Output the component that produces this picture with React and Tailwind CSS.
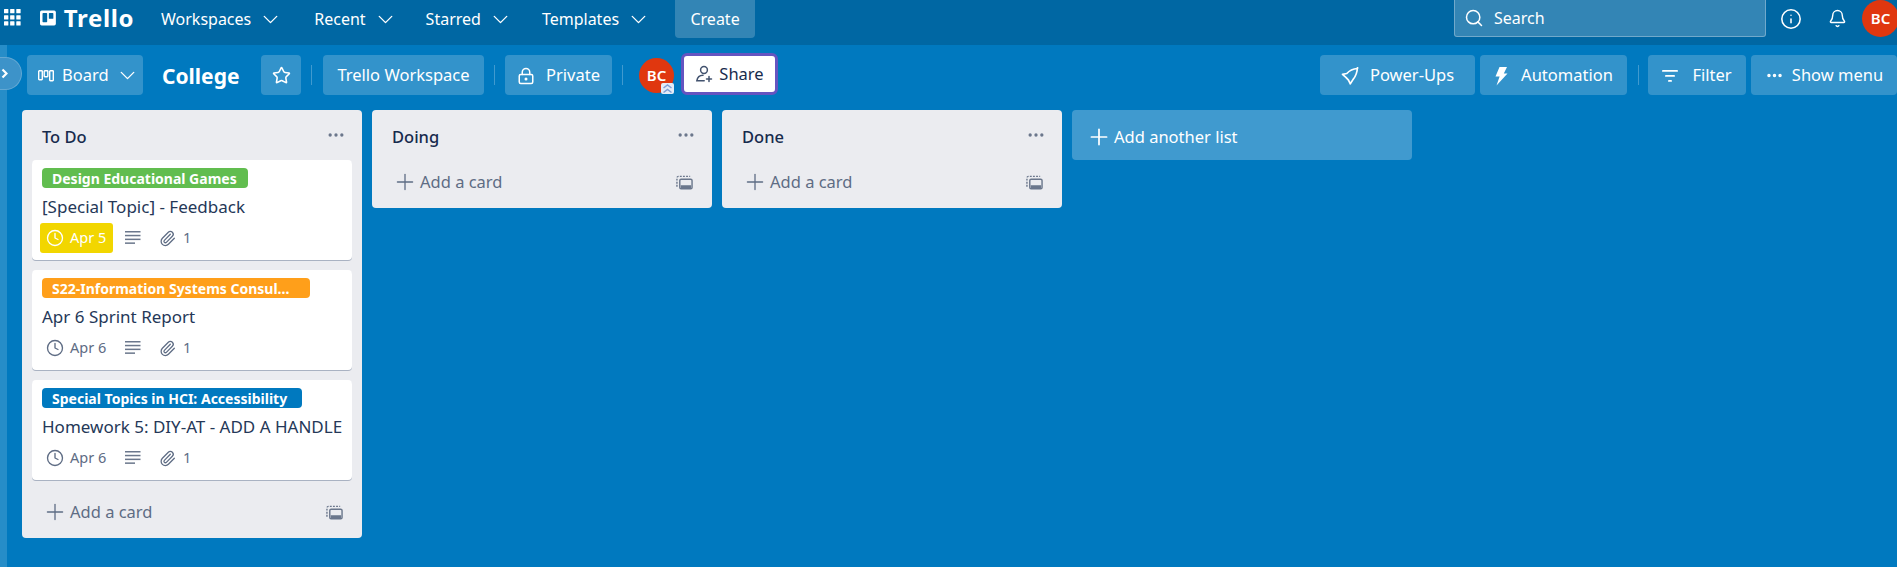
import React from 'react';
import { Bell, ChevronDown, Clock, Info, LockKeyhole, MoreHorizontal, Paperclip, Plus, Search, Star } from 'lucide-react';

const NavItem = ({ label, className }) => (
  <button className={`flex items-center gap-[7px] text-white text-[16px] ${className}`}>
    {label}
    <ChevronDown size={25} strokeWidth={1.3} />
  </button>
);

const HeadButton = ({ children, className = '' }) => (
  <button className={`flex items-center justify-center h-10 pt-px rounded-[4px] bg-white/20 text-white text-[16.5px] ${className}`}>
    {children}
  </button>
);

const Divider = ({ className = '' }) => <div className={`w-px h-5 bg-white/25 ${className}`} />;

const GridIcon = () => (
  <svg width="17" height="17" viewBox="0 0 18 18" fill="white">
    {[0, 6.5, 13].map((y) =>
      [0, 6.5, 13].map((x) => <rect key={`${x}-${y}`} x={x} y={y} width="4.6" height="4.6" rx="0.6" />)
    )}
  </svg>
);

const TrelloMark = () => (
  <svg width="19" height="18" viewBox="0 0 19 18">
    <rect width="19" height="18" rx="2" fill="white" />
    <rect x="3" y="3" width="5.6" height="11" rx="0.8" fill="#0067a3" />
    <rect x="10.6" y="3" width="5.4" height="7" rx="0.8" fill="#0067a3" />
  </svg>
);

const BoardIcon = () => (
  <svg width="16" height="12" viewBox="0 0 16 12" fill="none" stroke="white" strokeWidth="1.4">
    <rect x="0.7" y="0.7" width="3.6" height="9" rx="0.6" />
    <rect x="6.2" y="0.7" width="3.6" height="6" rx="0.6" />
    <rect x="11.7" y="0.7" width="3.6" height="10" rx="0.6" />
  </svg>
);

const ShareIcon = () => (
  <svg width="18" height="18" viewBox="0 0 18 18" fill="none" stroke="#42526e" strokeWidth="1.5" strokeLinecap="round">
    <circle cx="9" cy="5" r="3.4" />
    <path d="M8 10.2c-3.2 0-5.6 2-6.2 5.6h7.4" />
    <path d="M14 11.5v5M11.5 14h5" />
  </svg>
);

const RocketIcon = () => (
  <svg width="18" height="18" viewBox="0 0 18 18" fill="none" stroke="white" strokeWidth="1.7" strokeLinejoin="round">
    <path d="M16.5 1.5C12 1.8 8.5 3.4 5.8 6.5L1.5 7.4l3.4 3 2.6 2.8 1.8 3.6 2.8-4.4c2.6-3 4-6.6 4.4-11.9Z" />
  </svg>
);

const BoltIcon = () => (
  <svg width="14" height="20" viewBox="0 0 14 20" fill="white">
    <path d="M5.5 1h7.5L9.8 7.6H13.5L2.5 19.5 5.6 10.6H1.5L5.5 1Z" />
  </svg>
);

const FilterIcon = () => (
  <svg width="16" height="14" viewBox="0 0 16 14" fill="white">
    <rect x="0" y="1" width="16" height="1.8" rx="0.9" />
    <rect x="3" y="6" width="10" height="1.8" rx="0.9" />
    <rect x="6" y="11" width="4" height="1.8" rx="0.9" />
  </svg>
);

const DescIcon = () => (
  <svg width="16" height="14" viewBox="0 0 16 14" fill="#6b778c">
    <rect y="0" width="15.5" height="1.5" />
    <rect y="3.8" width="15.5" height="1.5" />
    <rect y="7.6" width="15.5" height="1.5" />
    <rect y="11.4" width="10" height="1.5" />
  </svg>
);

const TemplateIcon = () => (
  <svg width="17" height="15" viewBox="0 0 18 15" fill="none" stroke="#6b778c">
    <path d="M1 12V2.5A1.5 1.5 0 0 1 2.5 1H15" strokeWidth="1.5" strokeDasharray="2 1.3" />
    <rect x="4" y="4" width="13" height="10.2" rx="1.4" strokeWidth="1.5" />
    <rect x="5" y="10.4" width="11" height="3.2" fill="#6b778c" stroke="none" />
  </svg>
);

const Avatar = ({ className = '' }) => (
  <div className={`flex items-center justify-center rounded-full bg-[#e0370f] text-white font-semibold text-[15px] ${className}`}>BC</div>
);

const Card = ({ label, labelColor, labelWidth, title, date, overdue }) => (
  <div className="h-[100px] rounded-[4px] bg-white shadow-[0_1px_0_#a9b2c2] pl-[10px] pt-2">
    <div className={`flex items-center h-5 rounded-[4px] pl-[10px] text-white font-bold text-[14px] whitespace-nowrap overflow-hidden ${labelColor} ${labelWidth}`}>
      {label}
    </div>
    <div className="mt-[7px] h-6 leading-6 text-[#253858] text-[17px] whitespace-nowrap">{title}</div>
    <div className="flex items-center mt-[4px] h-[30px] text-[#5e6c84] text-[14.5px]">
      <div className={`flex items-center gap-[6px] h-[30px] -ml-[2px] pl-[6px] rounded-[3px] w-[73px] whitespace-nowrap ${overdue ? 'bg-[#f2d600] text-white' : ''}`}>
        <Clock size={18} strokeWidth={1.8} />
        <span>{date}</span>
      </div>
      <div className="ml-3"><DescIcon /></div>
      <Paperclip size={17} strokeWidth={1.8} className="ml-[18px]" />
      <span className="ml-[7px]">1</span>
    </div>
  </div>
);

const AddCard = () => (
  <div className="flex items-center justify-between h-12 pl-5 pr-[19px] pb-1 text-[#5e6c84] text-[16.5px]">
    <div className="flex items-center gap-[2px]">
      <Plus size={26} strokeWidth={1.2} />
      <span>Add a card</span>
    </div>
    <TemplateIcon />
  </div>
);

const List = ({ title, children }) => (
  <div className="w-[340px] shrink-0 rounded-[4px] bg-[#ebecf0]">
    <div className="flex items-center justify-between h-[50px] pl-5 pr-4 pt-1 text-[#172b4d] font-medium text-[16.5px]">
      <span>{title}</span>
      <MoreHorizontal size={20} color="#6b778c" className="-mt-1" />
    </div>
    {children}
  </div>
);

export default function App() {
  return (
    <div className="h-[567px] w-[1897px] overflow-hidden bg-[#0079bf] font-['Noto_Sans',sans-serif]">
      <header className="flex items-start h-[45px] bg-[#0067a3]">
        <div className="mt-[9px] ml-[4px]"><GridIcon /></div>
        <div className="flex items-center gap-[8px] mt-[9px] ml-[19px] h-[18px] w-[94px] text-white font-bold text-[24px] tracking-[0.6px]">
          <TrelloMark />
          <span>Trello</span>
        </div>
        <div className="flex items-center h-[38px] ml-[27px]">
          <NavItem label="Workspaces" />
          <NavItem label="Recent" className="ml-[31px]" />
          <NavItem label="Starred" className="ml-[28px]" />
          <NavItem label="Templates" className="ml-[29px]" />
          <button className="h-[38px] w-[80px] ml-[24px] rounded-b-[4px] bg-white/20 text-white text-[16px]">Create</button>
        </div>
        <div className="flex items-center h-[37px] ml-auto">
          <div className="flex items-center gap-[10px] w-[312px] h-[37px] pl-[9px] rounded-b-[3px] border border-t-0 border-white/30 bg-white/20 text-white text-[16px]">
            <Search size={20} strokeWidth={1.8} />
            <span>Search</span>
          </div>
          <Info size={22} strokeWidth={1.7} color="white" className="ml-[14px]" />
          <Bell size={19} strokeWidth={1.8} color="white" className="ml-[26px]" />
          <Avatar className="w-[37px] h-[37px] ml-[15px] -mr-[2px] shrink-0" />
        </div>
      </header>

      <div className="relative">
        <div className="absolute left-0 top-0 w-[7px] h-[522px] bg-white/15" />
        <div className="absolute -left-[15px] top-[12px] flex items-center justify-end w-[37px] h-[33px] rounded-full bg-[#3d93c9] pr-[13px] border border-white/20">
          <svg width="7" height="11" viewBox="0 0 7 11" fill="none" stroke="white" strokeWidth="2.2"><path d="M1.5 1.5l4 4-4 4" /></svg>
        </div>

        <div className="flex items-center h-[65px] pl-[27px] pb-[5px] text-white">
          <HeadButton className="w-[116px] !justify-start pl-[11px] gap-2">
            <BoardIcon />
            <span>Board</span>
            <ChevronDown size={25} strokeWidth={1.3} className="-ml-[2px]" />
          </HeadButton>
          <div className="ml-[19px] mt-[3px] w-[99px] font-bold text-[21px]">College</div>
          <HeadButton className="w-10"><Star size={19} strokeWidth={2} /></HeadButton>
          <Divider className="ml-[10px]" />
          <HeadButton className="w-[161px] ml-[11px]">Trello Workspace</HeadButton>
          <Divider className="ml-[10px]" />
          <HeadButton className="w-[107px] ml-[10px] gap-[11px]">
            <LockKeyhole size={18} strokeWidth={2} />
            <span>Private</span>
          </HeadButton>
          <Divider className="ml-[10px]" />
          <div className="relative ml-[16px]">
            <Avatar className="w-[35px] h-[35px]" />
            <svg className="absolute right-0 -bottom-[1px]" width="13" height="11" viewBox="0 0 13 11" fill="none" stroke="#7fa0d8" strokeWidth="1.5">
              <rect width="13" height="11" fill="#e4ecf7" stroke="none" rx="2" />
              <path d="M2.5 5l4-3 4 3M2.5 9.5l4-3 4 3" />
            </svg>
          </div>
          <button className="flex items-center justify-center gap-[6px] w-[97px] h-[42px] ml-[7px] -mt-[2px] rounded-[6px] border-[3px] border-[#6554c0] bg-white text-[#172b4d] text-[16.5px]">
            <ShareIcon />
            <span>Share</span>
          </button>
          <div className="flex items-center ml-auto">
            <HeadButton className="w-[155px] gap-[11px]"><RocketIcon /><span>Power-Ups</span></HeadButton>
            <HeadButton className="w-[147px] ml-[5px] gap-[13px]"><BoltIcon /><span>Automation</span></HeadButton>
            <Divider className="ml-[11px]" />
            <HeadButton className="w-[98px] ml-[9px] gap-[14px]"><FilterIcon /><span>Filter</span></HeadButton>
            <HeadButton className="w-[146px] ml-[5px] gap-[8px]"><MoreHorizontal size={19} strokeWidth={2.4} /><span>Show menu</span></HeadButton>
          </div>
        </div>

        <div className="flex items-start gap-[10px] pl-[22px]">
          <List title="To Do">
            <div className="flex flex-col gap-[10px] px-[10px] pb-[10px]">
              <Card label="Design Educational Games" labelColor="bg-[#61bd4f]" labelWidth="w-[206px]" title="[Special Topic] - Feedback" date="Apr 5" overdue />
              <Card label="S22-Information Systems Consul..." labelColor="bg-[#ff9f1a]" labelWidth="w-[268px]" title="Apr 6 Sprint Report" date="Apr 6" />
              <Card label="Special Topics in HCI: Accessibility" labelColor="bg-[#0079bf]" labelWidth="w-[260px]" title="Homework 5: DIY-AT - ADD A HANDLE" date="Apr 6" />
            </div>
            <AddCard />
          </List>
          <List title="Doing"><AddCard /></List>
          <List title="Done"><AddCard /></List>
          <div className="flex items-center gap-[2px] w-[340px] h-[50px] pl-[14px] pt-1 rounded-[4px] bg-white/25 text-white text-[16.5px]">
            <Plus size={26} strokeWidth={1.6} />
            <span>Add another list</span>
          </div>
        </div>
      </div>
    </div>
  );
}
